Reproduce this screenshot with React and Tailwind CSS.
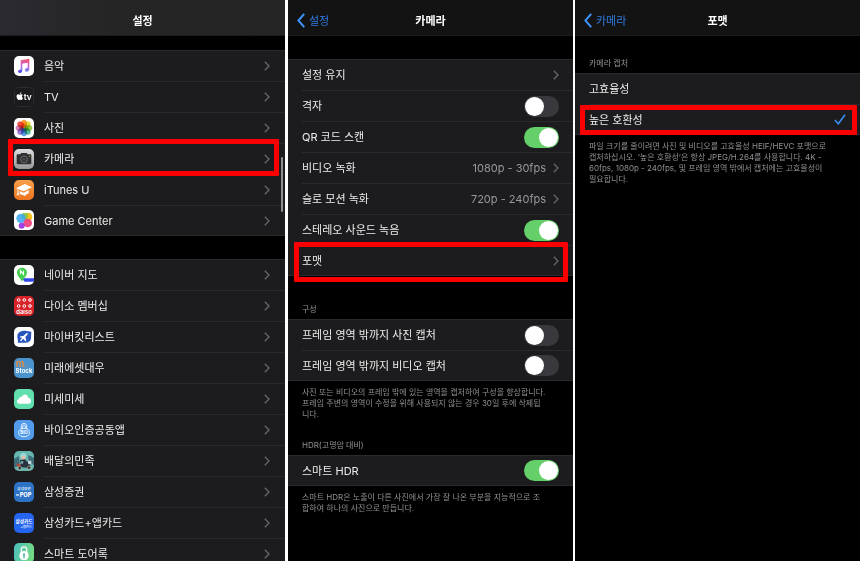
import { useState } from "react";
import clsx from "clsx";

const Chevron = () => (
    <svg viewBox="0 0 6 10" className="w-[6px] h-[10px] shrink-0" fill="none" stroke="#68686c" strokeWidth="1.3">
        <path d="M0.8 0.8 L5 5 L0.8 9.2" />
    </svg>
);

const Highlight = ({ className }) => (
    <span className={clsx("absolute z-10 border-[5px] border-[#fb0000] rounded-[1px] pointer-events-none", className)} />
);

const petals = ["#f9a03c", "#e6dc3c", "#9ccb4a", "#58bd9c", "#5c9fe0", "#9a7fd0", "#d080b4", "#f0584a"];

// App icons, all drawn on a 60x60 board
const icons = {
    music: (
        <>
            <defs>
                <linearGradient id="note" x1="0.6" y1="0" x2="0.4" y2="1">
                    <stop offset="0" stopColor="#fb5069" />
                    <stop offset="0.5" stopColor="#c86be0" />
                    <stop offset="1" stopColor="#3c8df5" />
                </linearGradient>
            </defs>
            <rect width="60" height="60" fill="#fff" />
            <path fill="url(#note)" d="M20 13 L46 8 V39 C46 45 43 47 38 47 C31 47 31 37 38 36 L41 35 V20 L25 23 V43 C25 48 22 51 17 51 C11 51 11 42 17 41 L20 40 Z" />
            <ellipse cx="18" cy="46" rx="5" ry="4.5" fill="#6b46ee" />
        </>
    ),
    tv: (
        <>
            <rect x="1" y="1" width="58" height="58" rx="13" fill="#1b1b1d" stroke="#3d3d40" strokeWidth="2" />
            <path fill="#fff" d="M18 23 C16 23 15 22 13 22 C8 22 7 27 8 31 C9 36 12 39 14 39 C16 39 16 38 18 38 C20 38 20 39 22 39 C24 39 26 36 27 33 C23 31 23 27 26 24 C24 21 21 22 18 23 Z M18 21 C18 18 20 16 22 16 C22 19 21 21 18 21 Z" />
            <text x="29" y="39" fontSize="25" fontWeight="600" fill="#fff">tv</text>
        </>
    ),
    photos: (
        <>
            <rect width="60" height="60" fill="#fff" />
            {petals.map((color, i) => (
                <ellipse key={color} cx="30" cy="17" rx="9" ry="12" fill={color} className="mix-blend-multiply" transform={`rotate(${i * 45} 30 30)`} />
            ))}
        </>
    ),
    camera: (
        <>
            <defs>
                <linearGradient id="silver" x1="0" y1="0" x2="0" y2="1">
                    <stop offset="0" stopColor="#dededf" />
                    <stop offset="1" stopColor="#98989a" />
                </linearGradient>
            </defs>
            <rect width="60" height="60" fill="url(#silver)" />
            <path fill="#303034" d="M8 19 Q8 16 11 16 H19 L22 12 H38 L41 16 H49 Q52 16 52 19 V43 Q52 46 49 46 H11 Q8 46 8 43 Z" />
            <circle cx="30" cy="31" r="10" fill="#2b2b2f" stroke="#909093" strokeWidth="2" />
            <circle cx="30" cy="31" r="5" fill="#4a4a4e" />
            <circle cx="46" cy="22" r="1.8" fill="#e0b13b" />
        </>
    ),
    itunesU: (
        <>
            <defs>
                <linearGradient id="orange" x1="0" y1="0" x2="0" y2="1">
                    <stop offset="0" stopColor="#f9a04a" />
                    <stop offset="1" stopColor="#ec7420" />
                </linearGradient>
            </defs>
            <rect width="60" height="60" fill="url(#orange)" />
            <path fill="#fff" d="M6 25 L32 12 L54 22 L29 34 Z" />
            <path fill="#fff" d="M17 33 L29 38 L44 30 V40 Q38 42 32 48 Q24 42 17 43 Z" />
            <path fill="none" stroke="#fff" strokeWidth="3" d="M12 28 V42 M9 46 L12 40 L15 46" />
        </>
    ),
    gameCenter: (
        <>
            <rect width="60" height="60" fill="#fff" />
            <circle cx="42" cy="21" r="13" fill="#f6c21c" />
            <circle cx="32" cy="18" r="10" fill="#7cc944" fillOpacity="0.85" />
            <circle cx="21" cy="25" r="14" fill="#37a3ec" fillOpacity="0.85" />
            <circle cx="41" cy="39" r="13" fill="#f0417d" fillOpacity="0.92" />
            <circle cx="23" cy="47" r="9" fill="#9a2fe0" fillOpacity="0.92" />
        </>
    ),
    naverMap: (
        <>
            <rect width="60" height="60" fill="#fff" />
            <path fill="#3048e8" d="M24 40 H60 V50 H32 Z" />
            <path fill="#46cf4e" d="M24 8 C14 8 9 15 9 23 C9 32 18 38 24 50 C30 38 39 32 39 23 C39 15 34 8 24 8 Z" />
            <path fill="none" stroke="#fff" strokeWidth="3.5" d="M19.5 28 V17 L28.5 28 V17" />
        </>
    ),
    daiso: (
        <>
            <rect width="60" height="60" fill="#d8232a" />
            {[14, 31, 48].map((x) =>
                [12, 30].map((y) => (
                    <circle key={`${x}-${y}`} cx={x} cy={y} r="4" fill="none" stroke="#fff" strokeWidth="3" />
                ))
            )}
            <text x="30" y="53" fontSize="18" fontWeight="600" fill="#fff" textAnchor="middle">daiso</text>
        </>
    ),
    bucketList: (
        <>
            <rect width="60" height="60" fill="#fff" />
            <path fill="#2855bd" d="M10 27 C11 14 25 10 38 12 L52 14 L51 33 C50 43 43 47 35 47 H11 C14 43 10 37 10 27 Z" />
            <path fill="#fff" d="M19 28 L28 27 L38 18 Q43 17 41 22 L34 30 L37 41 L34 43 L28 35 L21 43 L18 41 L24 32 L17 31 Z" />
        </>
    ),
    mStock: (
        <>
            <rect width="60" height="60" fill="#4b94cd" />
            <text x="5" y="26" fontSize="29" fontWeight="600" fill="#f08a2c">m.</text>
            <text x="30" y="46" fontSize="18" fontWeight="700" fill="#fff" textAnchor="middle">Stock</text>
        </>
    ),
    misemise: (
        <>
            <rect width="60" height="60" fill="#62dfae" />
            <path fill="#fff" d="M17 44 C7 44 6 32 15 30 C15 24 20 23 23 24 C26 13 42 14 42 26 C53 25 55 43 44 44 Z" />
        </>
    ),
    bioAuth: (
        <>
            <rect width="60" height="60" fill="#529bea" />
            <path fill="none" stroke="#fff" strokeWidth="2.5" d="M22 27 V17 C22 8 38 8 38 17 V27 M26 25 V18 C26 14 34 14 34 18 V25" />
            <path fill="none" stroke="#fff" strokeWidth="2.5" d="M30 25 C18 25 13 32 14 39 C15 47 21 50 30 50 C39 50 45 47 46 39 C47 32 42 25 30 25 Z" />
            <text x="30" y="43" fontSize="13" fontWeight="700" fill="#fff" textAnchor="middle">BIO</text>
        </>
    ),
    baemin: (
        <>
            <rect width="60" height="60" fill="#68b6b0" />
            <path fill="#3e6c78" d="M0 24 L14 15 L18 44 L0 50 Z M42 12 L60 20 V42 L45 35 Z" />
            <circle cx="28" cy="15" r="9" fill="#9fd8d5" />
            <path fill="#e9b9a0" d="M22 17 Q29 12 34 18 L33 25 L24 26 Z" />
            <path fill="#27333e" d="M17 28 L33 25 L39 32 L49 28 V45 L38 50 L16 48 L21 38 Z" />
            <path fill="#c4dbe4" d="M41 29 H52 V40 H43 Z" />
            <path fill="#7fa3ae" d="M21 31 L28 30 L27 39 L20 37 Z" />
            <path fill="#b3473a" d="M10 37 L20 40 L18 47 L7 45 Z" />
            <circle cx="17" cy="51" r="5" fill="#20262c" stroke="#d2b9a3" strokeWidth="2" />
            <circle cx="45" cy="50" r="5" fill="#20262c" stroke="#d2b9a3" strokeWidth="2" />
        </>
    ),
    samsungPop: (
        <>
            <rect width="60" height="60" fill="#2d72c4" />
            <text x="30" y="25" fontSize="11" fontWeight="700" fill="#dce9fa" textAnchor="middle">삼성증권</text>
            <text x="6" y="41" fontSize="9" fontWeight="700" fill="#fff">m</text>
            <text x="17" y="45" fontSize="17" fontWeight="800" fill="#fff">POP</text>
        </>
    ),
    samsungCard: (
        <>
            <rect width="60" height="60" fill="#2464ee" />
            <text x="30" y="31" fontSize="14" fontWeight="700" fill="#fff" textAnchor="middle">삼성카드</text>
            <text x="54" y="44" fontSize="10" fontWeight="700" fill="#d7e5ff" textAnchor="end">+앱카드</text>
        </>
    ),
    doorLock: (
        <>
            <defs>
                <linearGradient id="mint" x1="0" y1="0" x2="1" y2="0.3">
                    <stop offset="0" stopColor="#4bbfc0" />
                    <stop offset="1" stopColor="#73d884" />
                </linearGradient>
            </defs>
            <rect width="60" height="60" fill="url(#mint)" />
            <path fill="none" stroke="#fff" strokeWidth="4" d="M22 28 V19 C22 9 38 9 38 19 V28" />
            <circle cx="30" cy="38" r="14" fill="#fff" />
            <path fill="#4cb9b3" d="M30 31 A4 4 0 0 1 32 38 V46 H28 V38 A4 4 0 0 1 30 31 Z" />
        </>
    ),
};

const AppIcon = ({ name }) => (
    <svg viewBox="0 0 60 60" className="size-5 rounded-[5px] shrink-0" aria-hidden="true">
        {icons[name]}
    </svg>
);

const builtInApps = [
    { icon: "music", label: "음악" },
    { icon: "tv", label: "TV" },
    { icon: "photos", label: "사진" },
    { icon: "camera", label: "카메라", highlighted: true },
    { icon: "itunesU", label: "iTunes U" },
    { icon: "gameCenter", label: "Game Center" },
];

const installedApps = [
    { icon: "naverMap", label: "네이버 지도" },
    { icon: "daiso", label: "다이소 멤버십" },
    { icon: "bucketList", label: "마이버킷리스트" },
    { icon: "mStock", label: "미래에셋대우" },
    { icon: "misemise", label: "미세미세" },
    { icon: "bioAuth", label: "바이오인증공동앱" },
    { icon: "baemin", label: "배달의민족" },
    { icon: "samsungPop", label: "삼성증권" },
    { icon: "samsungCard", label: "삼성카드+앱카드" },
    { icon: "doorLock", label: "스마트 도어록" },
];

const Header = ({ title, back, className }) => (
    <header className={clsx("h-9 shrink-0 grid grid-cols-[1fr_auto_1fr] items-center pt-[6px] border-b border-[#1c1c1e]", className)}>
        <div className="pl-[9px]">
            {back && (
                <button type="button" className="flex items-center gap-1 text-[#2f7be0]">
                    <svg viewBox="0 0 8 15" className="w-2 h-[15px]" fill="none" stroke="#3b93fb" strokeWidth="2">
                        <path d="M7.2 0.9 L1.4 7.5 L7.2 14.1" />
                    </svg>
                    {back}
                </button>
            )}
        </div>
        <h1 className="font-bold text-white">{title}</h1>
    </header>
);

const Group = ({ children, className }) => (
    <ul className={clsx("bg-[#1c1c1e] shrink-0", className)}>{children}</ul>
);

// One 31px line of a group, the divider starts where the text does
const Row = ({ icon, children, highlight }) => (
    <li className="group relative h-[31px] flex items-stretch pl-[14px] border-[#2a2a2c] first:border-t last:border-b">
        {icon && <span className="flex items-center w-[30px]"><AppIcon name={icon} /></span>}
        <div className="flex-1 flex items-center border-t border-[#2a2a2c] group-first:border-t-0">{children}</div>
        {highlight && <Highlight className={highlight} />}
    </li>
);

const LinkRow = ({ label, value, wide, ...row }) => (
    <Row {...row}>
        <button type="button" className={clsx("w-full h-full flex items-center text-left", wide ? "pr-[15px]" : "pr-[14px]")}>
            <span className="flex-1">{label}</span>
            {value && <span className="text-[#98989e] mr-[7px]">{value}</span>}
            <Chevron />
        </button>
    </Row>
);

const ToggleRow = ({ label, on = false }) => {
    const [checked, setChecked] = useState(on);

    return (
        <Row>
            <label className="w-full flex items-center justify-between pr-[14px]">
                {label}
                <input
                    type="checkbox"
                    checked={checked}
                    onChange={(e) => setChecked(e.target.checked)}
                    className="appearance-none w-[35px] h-[21px] p-px rounded-full bg-[#39393d] checked:bg-[#65cf69] flex before:size-[19px] before:rounded-full before:bg-white checked:before:ml-auto"
                />
            </label>
        </Row>
    );
};

const SectionLabel = ({ children, className }) => (
    <h2 className={clsx("px-[14px] flex items-end text-[8px] leading-3 pb-1 text-[#919196]", className)}>{children}</h2>
);

const Note = ({ lines }) => (
    <p className="pl-[14px] pt-[6px] text-[8px] leading-[11px] text-[#919196] whitespace-nowrap">
        {lines.map((line) => (
            <span key={line} className="block">{line}</span>
        ))}
    </p>
);

const SettingsPanel = () => (
    <section className="relative flex-1 min-w-0 flex flex-col overflow-hidden bg-black">
        <Header title="설정" className="bg-linear-to-r from-[#2b2a30] to-[#252525] to-40%" />
        <Group className="mt-[14px]">
            {builtInApps.map(({ highlighted, ...app }) => (
                <LinkRow key={app.icon} {...app} wide highlight={highlighted && "left-2 right-[6px] -top-[4px] -bottom-[2px]"} />
            ))}
        </Group>
        <Group className="mt-[23px]">
            {installedApps.map((app) => (
                <LinkRow key={app.icon} {...app} wide />
            ))}
        </Group>
        {/* scroll indicator */}
        <span className="absolute right-[2px] top-[157px] w-[2px] h-[55px] rounded-full bg-[#8e8e90]" />
    </section>
);

const CameraPanel = () => (
    <section className="flex-1 min-w-0 flex flex-col overflow-hidden bg-black">
        <Header title="카메라" back="설정" className="bg-[#131314]" />
        <Group className="mt-[23px]">
            <LinkRow label="설정 유지" />
            <ToggleRow label="격자" />
            <ToggleRow label="QR 코드 스캔" on />
            <LinkRow label="비디오 녹화" value="1080p - 30fps" />
            <LinkRow label="슬로 모션 녹화" value="720p - 240fps" />
            <ToggleRow label="스테레오 사운드 녹음" on />
            <LinkRow label="포맷" highlight="left-[6px] right-[5px] -top-[3px] -bottom-[7px]" />
        </Group>
        <SectionLabel className="h-[43px]">구성</SectionLabel>
        <Group>
            <ToggleRow label="프레임 영역 밖까지 사진 캡처" />
            <ToggleRow label="프레임 영역 밖까지 비디오 캡처" />
        </Group>
        <Note
            lines={[
                "사진 또는 비디오의 프레임 밖에 있는 영역을 캡처하여 구성을 향상합니다.",
                "프레임 주변의 영역이 수정을 위해 사용되지 않는 경우 30일 후에 삭제됩",
                "니다.",
            ]}
        />
        <SectionLabel className="h-[35px]">HDR(고명암 대비)</SectionLabel>
        <Group>
            <ToggleRow label="스마트 HDR" on />
        </Group>
        <Note
            lines={[
                "스마트 HDR은 노출이 다른 사진에서 가장 잘 나온 부분을 지능적으로 조",
                "합하여 하나의 사진으로 만듭니다.",
            ]}
        />
    </section>
);

const FormatPanel = () => {
    const [format, setFormat] = useState("높은 호환성");

    return (
        <section className="flex-1 min-w-0 flex flex-col overflow-hidden bg-black">
            <Header title="포맷" back="카메라" className="bg-[#131314]" />
            <SectionLabel className="h-[37px]">카메라 캡처</SectionLabel>
            <Group>
                {["고효율성", "높은 호환성"].map((option) => (
                    <Row key={option} highlight={option === "높은 호환성" && "left-[5px] right-[3px] top-px -bottom-px"}>
                        <label className="relative w-full h-full flex items-center justify-between pr-[14px]">
                            {option}
                            <input
                                type="radio"
                                name="format"
                                checked={format === option}
                                onChange={() => setFormat(option)}
                                className="peer absolute inset-0 appearance-none"
                            />
                            <svg viewBox="0 0 12 11" className="w-3 h-[11px] invisible peer-checked:visible" fill="none" stroke="#3b8df5" strokeWidth="1.6">
                                <path d="M0.9 6 L4.3 9.8 L11 0.8" />
                            </svg>
                        </label>
                    </Row>
                ))}
            </Group>
            <Note
                lines={[
                    "파일 크기를 줄이려면 사진 및 비디오를 고효율성 HEIF/HEVC 포맷으로",
                    "캡처하십시오. ‘높은 호환성’은 항상 JPEG/H.264를 사용합니다. 4K -",
                    "60fps, 1080p - 240fps, 및 프레임 영역 밖에서 캡처에는 고효율성이",
                    "필요합니다.",
                ]}
            />
        </section>
    );
};

const App = () => (
    <main lang="ko" className="h-screen flex bg-white text-[11px] leading-4 text-[#ececec] font-['Inter','Noto_Sans_CJK_KR',sans-serif]">
        <SettingsPanel />
        <div className="w-[3px] shrink-0" />
        <CameraPanel />
        <div className="w-[2px] shrink-0" />
        <FormatPanel />
    </main>
);

export default App;
